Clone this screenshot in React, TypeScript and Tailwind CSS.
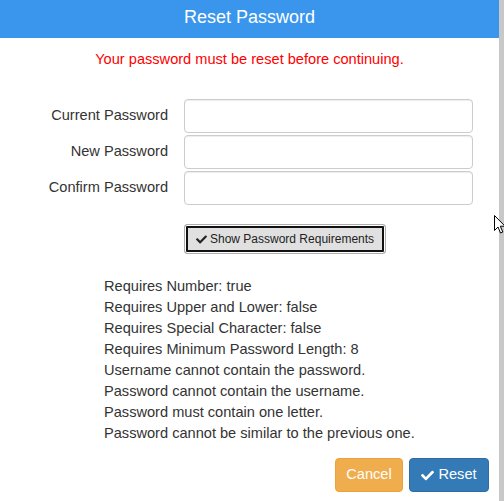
import { FaCheck } from 'react-icons/fa'

const fields = ['Current Password', 'New Password', 'Confirm Password']

const requirements = [
  'Requires Number: true',
  'Requires Upper and Lower: false',
  'Requires Special Character: false',
  'Requires Minimum Password Length: 8',
  'Username cannot contain the password.',
  'Password cannot contain the username.',
  'Password must contain one letter.',
  'Password cannot be similar to the previous one.',
]

export default function App() {
  return (
    <div className="relative flex w-[504px] h-[501px] overflow-hidden bg-white font-['Liberation_Sans',Arial,sans-serif] text-[14.6px] text-[#333]">
      <div className="flex w-[499px] flex-col">
        {/* header */}
        <div className="flex h-[38px] items-center justify-center bg-[#3a96ec] pb-[3px] text-[18px] text-white">
          Reset Password
        </div>

        <p className="mt-[11px] text-center leading-[20px] text-[#f00]">
          Your password must be reset before continuing.
        </p>

        {/* fields */}
        <div className="mt-[30px] flex flex-col gap-[2px]">
          {fields.map((f) => (
            <div key={f} className="flex h-[34px] items-center gap-[16px]">
              <label className="w-[168px] pb-[1px] text-right">{f}</label>
              <input
                type="password"
                className="h-[34px] w-[289px] rounded-[4px] border border-[#ccc] bg-white px-3 shadow-[inset_0_1px_1px_rgba(0,0,0,0.075)] outline-none"
              />
            </div>
          ))}
        </div>

        <div className="mt-[19px] pl-[184px]">
          <button className="inline-flex h-[30px] items-center gap-[3px] whitespace-nowrap rounded-[3px] border border-[#adadad] bg-[#e0e0e0] px-[11px] text-[12px] text-[#222] shadow-[inset_0_0_0_1px_#fff,inset_0_0_0_3px_#111]">
            <FaCheck className="h-[11px] w-[11px] text-[#222]" />
            Show Password Requirements
          </button>
        </div>

        {/* requirement list */}
        <ul className="mt-[22px] pl-[104px] leading-[21px]">
          {requirements.map((r) => (
            <li key={r}>{r}</li>
          ))}
        </ul>

        <div className="mt-[14px] flex justify-end gap-[6px] pr-[10px]">
          <button className="h-[34px] w-[68px] rounded-[4px] border border-[#eea236] bg-[#f0ad4e] text-white">
            Cancel
          </button>
          <button className="flex h-[34px] w-[80px] items-center justify-center gap-[4px] rounded-[4px] border border-[#2e6da4] bg-[#337ab7] text-white">
            <FaCheck className="h-[13px] w-[13px]" />
            Reset
          </button>
        </div>
      </div>

      {/* scrollbar edge */}
      <div className="w-[5px] bg-[#c8c8c8]" />

      {/* mouse pointer */}
      <svg className="absolute left-[494px] top-[215px]" width="12" height="19" viewBox="0 0 12 19">
        <path d="M0.5 0.5 L0.5 15.5 L4 12 L6.5 18 L8.8 17 L6.3 11.2 L11 11.2 Z" fill="#fff" stroke="#000" strokeWidth="1" strokeLinejoin="miter" />
      </svg>
    </div>
  )
}
